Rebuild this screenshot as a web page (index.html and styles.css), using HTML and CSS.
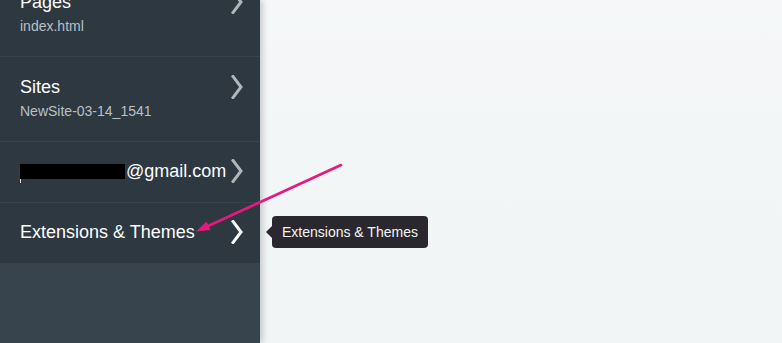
FILE: index.html
```html
<!DOCTYPE html>
<html>
<head>
<meta charset="utf-8">
<link rel="stylesheet" href="styles.css">
</head>
<body>
<div class="app">
  <aside class="sidebar">
    <ul class="menu">
      <li class="item item-sub">
        <div class="text">
          <div class="title">Pages</div>
          <div class="sub">index.html</div>
        </div>
        <svg class="chev" width="12" height="24" viewBox="0 0 12 24"><path d="M2 1.5 L10 12 L2 22.5" fill="none" stroke="currentColor" stroke-width="3" stroke-linecap="square"/></svg>
      </li>
      <li class="item item-sub">
        <div class="text">
          <div class="title">Sites</div>
          <div class="sub">NewSite-03-14_1541</div>
        </div>
        <svg class="chev" width="12" height="24" viewBox="0 0 12 24"><path d="M2 1.5 L10 12 L2 22.5" fill="none" stroke="currentColor" stroke-width="3" stroke-linecap="square"/></svg>
      </li>
      <li class="item">
        <div class="text">
          <div class="title"><span class="redact"></span>@gmail.com</div>
        </div>
        <svg class="chev" width="12" height="24" viewBox="0 0 12 24"><path d="M2 1.5 L10 12 L2 22.5" fill="none" stroke="currentColor" stroke-width="3" stroke-linecap="square"/></svg>
      </li>
      <li class="item active">
        <div class="text">
          <div class="title">Extensions &amp; Themes</div>
        </div>
        <svg class="chev" width="12" height="24" viewBox="0 0 12 24"><path d="M2 1.5 L10 12 L2 22.5" fill="none" stroke="currentColor" stroke-width="3" stroke-linecap="square"/></svg>
      </li>
    </ul>
    <div class="rest"></div>
  </aside>
  <main class="main"></main>
  <div class="tooltip">Extensions &amp; Themes</div>
  <svg class="annot" width="782" height="343" viewBox="0 0 782 343">
    <line x1="341" y1="165" x2="206" y2="227" stroke="#e6197f" stroke-width="2.6" stroke-linecap="round"/>
    <path d="M196 231.5 L206.5 221.5 L210.5 230 Z" fill="#e6197f"/>
  </svg>
</div>
</body>
</html>
```
FILE: styles.css
```css
html, body {
  margin: 0;
  padding: 0;
  height: 100%;
  overflow: hidden;
}
body {
  font-family: "Liberation Sans", Arial, sans-serif;
  background: #f3f6f7;
}
.app {
  display: flex;
  height: 343px;
  position: relative;
}
.sidebar {
  width: 260px;
  flex: none;
  display: flex;
  flex-direction: column;
  background: #37444d;
  box-shadow: 2px 0 7px rgba(0, 0, 0, 0.22);
  position: relative;
  z-index: 1;
  overflow: hidden;
}
.menu {
  list-style: none;
  margin: -28px 0 0 0;
  padding: 0;
}
.item {
  display: flex;
  align-items: flex-start;
  justify-content: space-between;
  background: #2d3841;
  border-bottom: 1px solid #38444d;
  padding: 18px 17px 19px 20px;
  color: #fff;
}
.item-sub {
  padding-top: 19px;
  padding-bottom: 21px;
}
.title {
  font-size: 18px;
  line-height: 22px;
  color: #fdfdfd;
  display: flex;
  align-items: center;
}
.sub {
  font-size: 14px;
  line-height: 18px;
  margin-top: 4px;
  color: #b9c0c5;
}
.redact {
  display: inline-block;
  width: 105px;
  height: 15px;
  background: #000;
  margin-top: 1px;
  margin-right: 1px;
  position: relative;
}
.redact::after {
  content: "";
  position: absolute;
  left: 0;
  bottom: -4px;
  width: 1px;
  height: 4px;
  background: #ddd;
}
.chev {
  display: block;
  flex: none;
  color: #b0b7bc;
  margin-top: -1px;
}
.active .chev {
  color: #ffffff;
}
.rest {
  flex: 1;
  background: #37444d;
}
.main {
  flex: 1;
  background: linear-gradient(180deg, #f5f7f8 0%, #f1f5f6 100%);
}
.tooltip {
  position: absolute;
  left: 272px;
  top: 216px;
  height: 32px;
  line-height: 32px;
  padding: 0 10px;
  background: #2a282e;
  color: #f4f4f4;
  font-size: 14px;
  border-radius: 4px;
  z-index: 2;
}
.tooltip::before {
  content: "";
  position: absolute;
  left: -6px;
  top: 10px;
  border-top: 6px solid transparent;
  border-bottom: 6px solid transparent;
  border-right: 6px solid #2a282e;
}
.annot {
  position: absolute;
  left: 0;
  top: 0;
  z-index: 3;
  pointer-events: none;
}
```
